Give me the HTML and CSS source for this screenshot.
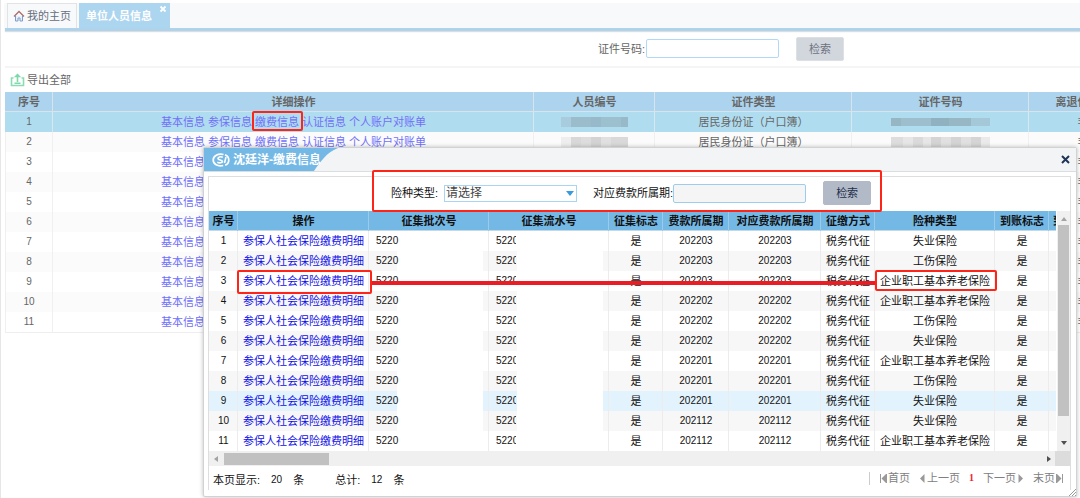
FILE: index.html
```html
<!DOCTYPE html>
<html lang="zh-CN">
<head>
<meta charset="utf-8">
<title>单位人员信息</title>
<link rel="stylesheet" href="styles.css">
</head>
<body>
<main class="page">
  <nav class="tabs">
    <a class="tab" href="#home">
      <svg class="home-icon" viewBox="0 0 12 12" aria-hidden="true"><path d="M2.500 6v5h2.500V8h2v3h2.500V6" fill="#e8f1fb" stroke="#7d9cc9"/><path d="M1 6.500 6 1.500l5 5" fill="none" stroke="#a8706c" stroke-width="1.300"/></svg>
      我的主页</a>
    <a class="tab tab-active" href="#staff">单位人员信息
      <svg class="tab-close" viewBox="0 0 8 8" aria-hidden="true"><path d="M1.500 1.500l5 5M6.500 1.500l-5 5" stroke="#fff" stroke-width="1.800"/></svg></a>
  </nav>
  <form class="search">
    <label for="idno">证件号码:</label>
    <input id="idno" class="field" type="text">
    <button class="btn" type="button">检索</button>
  </form>
  <div class="toolbar">
    <button class="export" type="button">
      <svg class="export-icon" viewBox="0 0 15 14" aria-hidden="true"><path d="M3.500 5h-2v7.500h12V5h-2" fill="none" stroke="#8bdcb4" stroke-width="1.600"/><path d="M7.500 9V3M4.500 10.200h6" fill="none" stroke="#7fd8ac" stroke-width="1.600"/><path d="M3.800 4.200 7.500.5l3.700 3.700z" fill="#7fd8ac"/></svg>
      导出全部</button>
  </div>
  <div class="staff-wrap">
    <table class="staff">
      <colgroup><col class="w48"><col class="w481"><col class="w121"><col class="w197"><col class="w177"><col class="w108"></colgroup>
      <thead><tr><th>序号</th><th>详细操作</th><th>人员编号</th><th>证件类型</th><th>证件号码</th><th>离退休状态</th></tr></thead>
      <tbody id="staff-body"></tbody>
    </table>
  </div>
</main>

<section class="dialog" role="dialog" aria-label="缴费信息">
  <header class="dialog-head">
    <div class="dialog-title">
      <svg class="title-shape" viewBox="0 0 134 23" preserveAspectRatio="none" aria-hidden="true"><path d="M0 0h134C122 5 117 13 110 23H0z" fill="#74b8e6"/></svg>
      <svg class="logo" viewBox="0 0 18 14" aria-hidden="true"><path d="M11.500 1.500C6 .2 1.200 2.800 1.200 7s4.500 6.800 10 5.500" fill="none" stroke="#fff" stroke-width="1.700"/><path d="M13 1.800c5 2 5 8.400.2 10.400" fill="none" stroke="#fff" stroke-width="1.700"/><path d="M10.800 4.200C8.500 3.300 5.800 4 6 5.600c.2 1.700 4.600 1 4.500 2.900-.1 1.600-3.300 1.700-5.200.7M14 4l-1.500 6" fill="none" stroke="#fff" stroke-width="1.600"/></svg>
      <span>沈廷洋-缴费信息</span>
    </div>
    <button class="dialog-close" type="button" aria-label="关闭"><svg viewBox="0 0 9 9" aria-hidden="true"><path d="M1 1l7 7M8 1 1 8" stroke="#1f3558" stroke-width="2"/></svg></button>
  </header>
  <div class="panel">
    <form class="filter">
      <label for="kind">险种类型:</label>
      <span class="select-box"><select id="kind"><option>请选择</option></select></span>
      <label class="period-label" for="period">对应费款所属期:</label>
      <input id="period" class="field field-grey" type="text">
      <button class="btn btn-dark" type="button">检索</button>
    </form>
    <div class="grid-area">
      <div class="grid-view">
        <table class="grid">
          <colgroup><col class="w29"><col class="w131"><col class="w120"><col class="w120"><col class="w54"><col class="w66"><col class="w92"><col class="w54"><col class="w120"><col class="w54"><col class="w54"></colgroup>
          <thead><tr><th>序号</th><th>操作</th><th>征集批次号</th><th>征集流水号</th><th>征集标志</th><th>费款所属期</th><th>对应费款所属期</th><th>征缴方式</th><th>险种类型</th><th>到账标志</th><th>到账日期</th></tr></thead>
          <tbody id="grid-body"></tbody>
        </table>
      </div>
      <div class="vscroll"><i class="arrow arrow-up"></i><i class="vthumb"></i><i class="arrow arrow-down"></i></div>
    </div>
    <div class="hscroll"><i class="arrow arrow-left"></i><i class="hthumb"></i><i class="arrow arrow-right"></i><i class="corner"></i></div>
    <footer class="foot">
      <div class="totals"><span>本页显示:</span><span class="num">20</span><span>条</span><span class="total-label">总计:</span><span class="num">12</span><span>条</span></div>
      <nav class="pager">
        <a href="#first"><svg class="pg" viewBox="0 0 7 9" aria-hidden="true"><path d="M.5 0v9M6.500 0v9" stroke="#999"/><path d="M6 0v9L1.500 4.500z" fill="#999"/></svg>首页</a>
        <a href="#prev"><svg class="pg" viewBox="0 0 7 9" aria-hidden="true"><path d="M5.500 0v9L1 4.500z" fill="#999"/></svg>上一页</a>
        <strong>1</strong>
        <a href="#next">下一页<svg class="pg" viewBox="0 0 7 9" aria-hidden="true"><path d="M1.500 0v9L6 4.500z" fill="#999"/></svg></a>
        <a href="#last">末页<svg class="pg" viewBox="0 0 7 9" aria-hidden="true"><path d="M.5 0v9M6.500 0v9" stroke="#999"/><path d="M1 0v9l4.500-4.500z" fill="#999"/></svg></a>
      </nav>
    </footer>
  </div>
  <svg class="grip" viewBox="0 0 8 8" aria-hidden="true"><path d="M1 8l7-7M4 8l4-4M7 8l1-1" stroke="#999"/></svg>
</section>

<div class="mark mark-link"></div>
<div class="mark mark-filter"></div>
<div class="mark-line"></div>
<div class="mark mark-detail"></div>
<div class="mark mark-kind"></div>
<script src="app.js"></script>
</body>
</html>
```
FILE: styles.css
```css
* { box-sizing: border-box; }
body {
  margin: 0;
  min-height: 100vh;
  position: relative;
  overflow: hidden;
  background: #fff;
  color: #666;
  font: 11px/16px "Liberation Sans", "Noto Sans CJK SC", sans-serif;
}
a { text-decoration: none; color: inherit; }
button, input, select { font: inherit; color: inherit; margin: 0; }
svg { display: block; flex: none; }

.page { min-height: 100vh; border-left: 1px solid #e6e6e6; padding: 3px 0 0 4px; }
.tabs {
  display: flex;
  gap: 2px;
  padding-left: 2px;
  background: #f8f9fb;
  border-bottom: 3px solid #aed4ed;
  box-shadow: 0 1px 1px #ddd;
}
.tab {
  display: flex;
  align-items: center;
  gap: 2px;
  height: 25px;
  padding: 0 5px 0 5px;
  border: 1px solid #e2e3e5;
  border-bottom: 0;
  color: #666f7c;
}
.tab-active {
  position: relative;
  padding: 0 17px 0 6px;
  border-color: #aed4ee;
  background: #acd5ef;
  color: #fff;
  font-weight: bold;
}
.home-icon { width: 12px; height: 12px; }
.tab-close { position: absolute; top: 1px; right: 2px; width: 8px; height: 8px; }

.search {
  display: flex;
  align-items: center;
  height: 37px;
  padding-left: 593px;
  border-bottom: 2px solid #f5f5f5;
}
.search .field { margin-left: 1px; }
.field {
  width: 133px;
  height: 19px;
  padding: 0 3px;
  border: 1px solid #b2d9f3;
  border-radius: 2px;
  background: #fff;
}
.field-grey { background: #f5f5f5; border-color: #9dcdec; }
.btn {
  width: 48px;
  height: 24px;
  margin-left: 17px;
  padding: 0;
  border: 1px solid #dcdfe4;
  border-radius: 2px;
  background: #d2d6dd;
  color: #6c7380;
}
.btn-dark { background: #b2bac8; border-color: #b2bac8; color: #1f2f4b; }

.toolbar { display: flex; align-items: center; height: 24px; padding-left: 5px; }
.export {
  display: flex;
  align-items: center;
  gap: 2px;
  padding: 0;
  border: 0;
  background: none;
}
.export-icon { width: 15px; height: 14px; }

.staff-wrap { overflow: hidden; }
table { border-collapse: collapse; table-layout: fixed; width: 1px; }
th, td { padding: 0; overflow: hidden; white-space: nowrap; text-align: center; }
.w29 { width: 29px; } .w48 { width: 48px; } .w54 { width: 54px; } .w66 { width: 66px; }
.w92 { width: 92px; } .w108 { width: 108px; } .w120 { width: 120px; } .w121 { width: 121px; }
.w131 { width: 131px; } .w177 { width: 177px; } .w197 { width: 197px; } .w481 { width: 481px; }
.num { font-size: 10px; }

.staff th {
  height: 20px;
  background: #acd4ee;
  box-shadow: inset -1px -1px #d9e4ea;
}
.staff td { height: 20px; box-shadow: inset -1px 0 #f0f0f0; }
.staff td:first-child { box-shadow: inset 1px 0 #f0f0f0, inset -1px 0 #f0f0f0; }
.staff tr:nth-child(even) td { background: #fbfbfb; }
.staff tr.picked td { background: #b0dcef; box-shadow: inset -1px 0 #d9e8ee; }
.staff tr:last-child td { border-bottom: 1px solid #eee; }
.ops { display: flex; justify-content: center; gap: 3px; color: #7070fa; }
.mosaic { display: block; height: 11px; margin: 0 auto; }
.mosaic-id { width: 67px; background: linear-gradient(90deg, #eee 10px, #d8d8d8 10px 20px, #ddd 20px 30px, #d3d3d3 30px 40px, #e0e0e0 40px 50px, #d9d9d9 50px); }
.mosaic-card { width: 99px; background: linear-gradient(90deg, #ddd 12px, #e6e6e6 12px 22px, #dadada 22px 32px, #e6e6e6 32px 40px, #d4d4d4 40px 50px, #e0e0e0 50px 60px, #d4d4d4 60px 70px, #e0e0e0 70px 80px, #d5d5d5 80px 90px, #eaeaea 90px); }
.picked .mosaic-id { height: 10px; background: linear-gradient(90deg, #a8ccdd 10px, #9bbccb 10px 30px, #97b9c9 30px 40px, #9dc0cf 40px 60px, #98bac8 60px); }
.picked .mosaic-card { height: 8px; background: linear-gradient(90deg, #96b6c3 10px, #9dbfcd 10px 40px, #90b1bf 40px 58px, #97b7c5 58px 80px, #a4c8d7 80px); }

.dialog {
  position: absolute;
  top: 147px;
  left: 203px;
  right: 3px;
  border: 1px solid #d0d2d4;
  border-radius: 2px;
  background: #fff;
  color: #111;
  padding-bottom: 6px;
  box-shadow: 0 0 4px rgba(0, 0, 0, .25);
}
.dialog-head {
  display: flex;
  justify-content: space-between;
  height: 24px;
  background: #f3f4f6;
  border-bottom: 1px solid #dcdddf;
}
.dialog-title {
  position: relative;
  display: flex;
  align-items: center;
  gap: 3px;
  width: 134px;
  padding-left: 8px;
  color: #fff;
  font-size: 12px;
  font-weight: bold;
  white-space: nowrap;
}
.title-shape { position: absolute; inset: 0; width: 100%; height: 100%; }
.logo { position: relative; width: 18px; height: 14px; }
.dialog-title span { position: relative; }
.dialog-close { padding: 0 6px; border: 0; background: none; }
.dialog-close svg { width: 9px; height: 9px; }

.panel { margin: 4px 5px 0 4px; border: 1px solid #dedede; border-bottom: 0; }
.filter {
  display: flex;
  align-items: center;
  height: 34px;
  padding: 0 0 2px 182px;
}
.select-box { position: relative; margin-left: 6px; }
.select-box select {
  display: block;
  appearance: none;
  width: 133px;
  height: 17px;
  padding: 0 1px;
  border: 1px solid #a9d5f2;
  border-radius: 0;
  background: #fff;
  color: #444;
  font-size: 12px;
  line-height: 15px;
}
.select-box::after {
  content: "";
  position: absolute;
  top: 6px;
  right: 3px;
  border: 4px solid transparent;
  border-top: 5px solid #3a9bdc;
  border-bottom: 0;
  pointer-events: none;
}
.period-label { margin-left: 16px; }

.grid-area { display: flex; height: 240px; }
.grid-view { flex: 1; min-width: 0; overflow: hidden; }
.grid th { height: 20px; background: #74b8e6; box-shadow: inset -1px 0 #9ccbe9, inset 0 -1px #c3d9e6; }
.grid th:last-child { padding-left: 4px; text-align: left; }
.grid td { height: 20px; box-shadow: inset -1px 0 #ececec; }
.grid tr:nth-child(even) td { background-color: #f7f7f7; }
.grid tr.hover td { background-color: #e2f3fe; }
.grid a { color: #1010e8; }
.grid td.code {
  padding-left: 7px;
  text-align: left;
  background-image: linear-gradient(#fff, #fff);
  background-size: 86px 100%;
  background-position: 28px 0;
  background-repeat: no-repeat;
}
.code span { display: block; overflow: hidden; }
.code .cut { width: 20px; }

.vscroll, .hscroll { display: flex; align-items: center; background: #f0f0f0; }
.vscroll { flex-direction: column; width: 14px; padding: 6px 0; border-left: 1px solid #fff; }
.vthumb { width: 11px; flex: 0 0 191px; margin: 4px 0 auto; background: #c1c1c1; }
.hscroll { height: 15px; padding-left: 5px; }
.hthumb { flex: 0 0 105px; height: 12px; margin: 0 auto 0 6px; background: #c1c1c1; }
.corner { width: 15px; height: 15px; margin-left: 4px; background: #dcdcdc; }
.arrow { border: 3px solid transparent; }
.arrow-up { border-top: 0; border-bottom: 4px solid #a3a3a3; }
.arrow-down { border-bottom: 0; border-top: 4px solid #505050; }
.arrow-left { border-left: 0; border-right: 4px solid #a3a3a3; }
.arrow-right { border-right: 0; border-left: 4px solid #505050; }

.foot { display: flex; justify-content: space-between; align-items: center; height: 24px; padding: 0 7px 0 4px; }
.totals { display: flex; gap: 11px; padding-top: 4px; }
.total-label { margin-left: 20px; }
.pager {
  display: flex;
  align-items: center;
  gap: 9px;
  height: 13px;
  padding-left: 10px;
  border-left: 1px solid #ccc;
  color: #808080;
}
.pager a { display: flex; align-items: center; gap: 1px; }
.pager strong { color: #f02030; font: bold 10px/16px "Liberation Serif", serif; }
.pg { width: 7px; height: 9px; }
.grip { position: absolute; right: 0; bottom: 0; width: 8px; height: 8px; }

.mark { position: absolute; border: 2px solid #ff2418; border-radius: 2px; pointer-events: none; }
.mark-link { left: 252px; top: 111px; width: 51px; height: 20px; }
.mark-filter { left: 372px; top: 170px; width: 510px; height: 42px; }
.mark-detail { left: 237px; top: 270px; width: 135px; height: 24px; }
.mark-kind { left: 875px; top: 270px; width: 122px; height: 21px; }
.mark-line { position: absolute; left: 370px; top: 281px; width: 507px; height: 4px; background: #ea1c24; }
```
FILE: app.js
```js
const ops = ["基本信息", "参保信息", "缴费信息", "认证信息", "个人账户对账单"];
const opLinks = ops.map(t => `<a href="#op">${t}</a>`).join("");
let staffRows = "";
for (let i = 1; i <= 11; i++) {
  staffRows += `<tr class="${i === 1 ? "picked" : ""}"><td class="num">${i}</td>
    <td><div class="ops">${opLinks}</div></td>
    <td><span class="mosaic mosaic-id"></span></td>
    <td>居民身份证（户口簿）</td>
    <td><span class="mosaic mosaic-card"></span></td><td>非</td></tr>`;
}
document.getElementById("staff-body").innerHTML = staffRows;

const payments = [
  ["202203", "失业保险"], ["202203", "工伤保险"], ["202203", "企业职工基本养老保险"],
  ["202202", "企业职工基本养老保险"], ["202202", "工伤保险"], ["202202", "失业保险"],
  ["202201", "企业职工基本养老保险"], ["202201", "工伤保险"], ["202201", "失业保险"],
  ["202112", "失业保险"], ["202112", "企业职工基本养老保险"]
];
document.getElementById("grid-body").innerHTML = payments.map(([period, kind], i) =>
  `<tr class="${i === 8 ? "hover" : ""}"><td class="num">${i + 1}</td>
    <td><a href="#detail">参保人社会保险缴费明细</a></td>
    <td class="num code"><span>5220</span></td>
    <td class="num code"><span class="cut">5220</span></td>
    <td>是</td><td class="num">${period}</td><td class="num">${period}</td>
    <td>税务代征</td><td>${kind}</td><td>是</td><td></td></tr>`).join("");
```
